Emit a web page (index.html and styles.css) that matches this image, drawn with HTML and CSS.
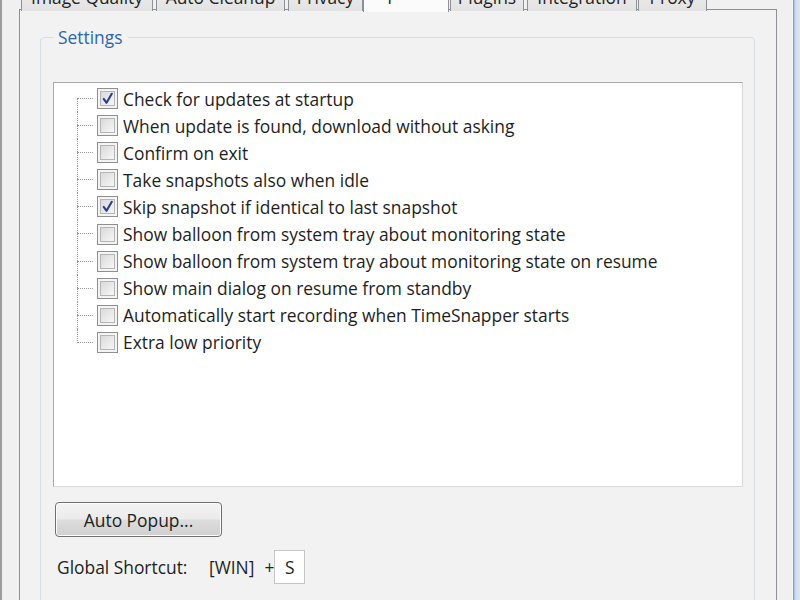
FILE: index.html
```html
<!DOCTYPE html>
<html>
<head>
<meta charset="utf-8">
<link rel="stylesheet" href="styles.css">
</head>
<body>
<div class="window">
  <div class="client">
    <div class="tabs">
      <div class="tab t1">Image Quality</div>
      <div class="tab t2">Auto Cleanup</div>
      <div class="tab t3">Privacy</div>
      <div class="tab t4 selected">Options</div>
      <div class="tab t5">Plugins</div>
      <div class="tab t6">Integration</div>
      <div class="tab t7">Proxy</div>
    </div>
    <div class="panel">
      <fieldset class="group">
        <legend>Settings</legend>
        <div class="list">
          <div class="tree">
            <div class="row"><span class="box checked"><svg viewBox="0 0 20 20"><path d="M6 10.5 L9 14.5 L14.5 5" /></svg></span><span class="label">Check for updates at startup</span></div>
            <div class="row"><span class="box"></span><span class="label">When update is found, download without asking</span></div>
            <div class="row"><span class="box"></span><span class="label">Confirm on exit</span></div>
            <div class="row"><span class="box"></span><span class="label">Take snapshots also when idle</span></div>
            <div class="row"><span class="box checked"><svg viewBox="0 0 20 20"><path d="M6 10.5 L9 14.5 L14.5 5" /></svg></span><span class="label">Skip snapshot if identical to last snapshot</span></div>
            <div class="row"><span class="box"></span><span class="label">Show balloon from system tray about monitoring state</span></div>
            <div class="row"><span class="box"></span><span class="label">Show balloon from system tray about monitoring state on resume</span></div>
            <div class="row"><span class="box"></span><span class="label">Show main dialog on resume from standby</span></div>
            <div class="row"><span class="box"></span><span class="label">Automatically start recording when TimeSnapper starts</span></div>
            <div class="row last"><span class="box"></span><span class="label">Extra low priority</span></div>
          </div>
        </div>
        <button class="btn">Auto Popup...</button>
        <div class="shortcut">
          <span class="sc-label">Global Shortcut:</span>
          <span class="sc-win">[WIN]</span>
          <span class="sc-plus">+</span>
          <span class="sc-key">S</span>
        </div>
      </fieldset>
    </div>
  </div>
  <div class="frame-right"></div>
</div>
</body>
</html>
```

FILE: styles.css
```css
* { box-sizing: border-box; }
html, body { margin: 0; padding: 0; }
body {
  width: 800px;
  height: 600px;
  overflow: hidden;
  font-family: "Open Sans", "Noto Sans", sans-serif;
  font-size: 17.4px;
  color: #1e1e1e;
  background: #f0f0f0;
}
.window {
  width: 800px;
  height: 600px;
  display: flex;
  background: #f0f0f0;
  border-left: 2px solid #9c9c9c;
}
.client {
  flex: 1;
  display: flex;
  flex-direction: column;
  padding-left: 17px;
}
.frame-right {
  width: 8px;
  background: linear-gradient(to right, #f6f6f6 0, #f6f6f6 1px, #6d8fb7 1px, #c9d9ec 3px, #dde8f4 8px);
}
.tabs {
  display: flex;
  height: 30px;
  margin-top: -20px;
  padding-left: 2px;
  position: relative;
  z-index: 2;
}
.tab {
  height: 30px;
  border: 1px solid #8d9097;
  border-bottom: none;
  background: linear-gradient(#f2f2f2, #e2e2e2);
  text-align: center;
  line-height: 31px;
  color: #222;
  margin-right: 3px;
  margin-top: 1px;
  border-radius: 2px 2px 0 0;
  overflow: hidden;
}
.t1 { width: 132px; }
.t2 { width: 129px; }
.t3 { width: 75px; margin-right: 1px; }
.t4 { width: 86px; margin-right: 1px; }
.t5 { width: 74px; }
.t6 { width: 110px; margin-right: 1px; }
.t7 { width: 69px; }
.tab.selected {
  background: #fbfbfb;
  margin-top: -1px;
  height: 33px;
  margin-left: -1px;
  margin-right: 1px;
  line-height: 27px;
  border-color: #8d9097;
}
.panel {
  width: 758px;
  flex: 1;
  border: 1px solid #8d9097;
  border-bottom: none;
  background: #f2f2f2;
  padding: 17px 21px 0 20px;
  margin-top: -1px;
  position: relative;
  z-index: 1;
}
.group {
  margin: 0;
  border: 1px solid #d5dfe5;
  border-radius: 4px;
  padding: 0 0 0 12px;
  height: 620px;
  min-width: 0;
}
.group legend {
  color: #2f65aa;
  padding: 0 5px;
  margin-left: 0;
  line-height: 20px;
  font-size: 17.4px;
}
.list {
  margin-top: 35px;
  width: 690px;
  height: 405px;
  background: #fff;
  border: 1px solid #a9a9a9;
  border-right-color: #d8d8d8;
  border-bottom-color: #d8d8d8;
  padding: 2px 0 0 0;
}
.tree {
  position: relative;
  padding-left: 43px;
}
.row {
  position: relative;
  display: flex;
  align-items: center;
  height: 27.1px;
}
.row::before {
  content: "";
  position: absolute;
  left: -20px;
  top: 13px;
  width: 16px;
  border-top: 1px dotted #9a9a9a;
}
.row::after {
  content: "";
  position: absolute;
  left: -20px;
  top: 0;
  height: 27px;
  border-left: 1px dotted #9a9a9a;
}
.row:first-child::after { top: 13px; height: 14px; }
.row.last::after { height: 14px; }
.box {
  width: 21px;
  height: 21px;
  border: 1px solid #8f8f8f;
  background: #fff;
  padding: 2px;
  margin-right: 5px;
  flex: none;
  position: relative;
  box-shadow: inset 0 0 0 2px #f4f4f4;
}
.box::before {
  content: "";
  position: absolute;
  inset: 2px;
  border: 1px solid #b5b5b5;
  background: linear-gradient(135deg, #d9d9d9, #f7f7f7);
}
.box svg {
  position: absolute;
  inset: 0;
  width: 19px;
  height: 19px;
  z-index: 1;
}
.box svg path {
  fill: none;
  stroke: #2b3f88;
  stroke-width: 2.2;
  stroke-linecap: round;
  stroke-linejoin: round;
}
.label { white-space: nowrap; }
.btn {
  display: block;
  margin-top: 15px;
  margin-left: 2px;
  width: 167px;
  height: 35px;
  font-family: inherit;
  font-size: 17.4px;
  color: #1e1e1e;
  border: 1px solid #707070;
  border-radius: 4px;
  background: linear-gradient(#f3f3f3 0%, #ebebeb 48%, #dddddd 52%, #cfcfcf 100%);
  box-shadow: inset 0 0 0 1px #fcfcfc;
  padding: 0;
}
.shortcut {
  display: flex;
  align-items: center;
  margin-top: 13px;
  margin-left: 4px;
  height: 34px;
}
.sc-label { width: 152px; }
.sc-win { margin-right: 10px; }
.sc-plus { margin-right: 0; }
.sc-key {
  width: 31px;
  height: 34px;
  background: #fff;
  border: 1px solid #c6c6c6;
  display: flex;
  align-items: center;
  justify-content: center;
}
```
